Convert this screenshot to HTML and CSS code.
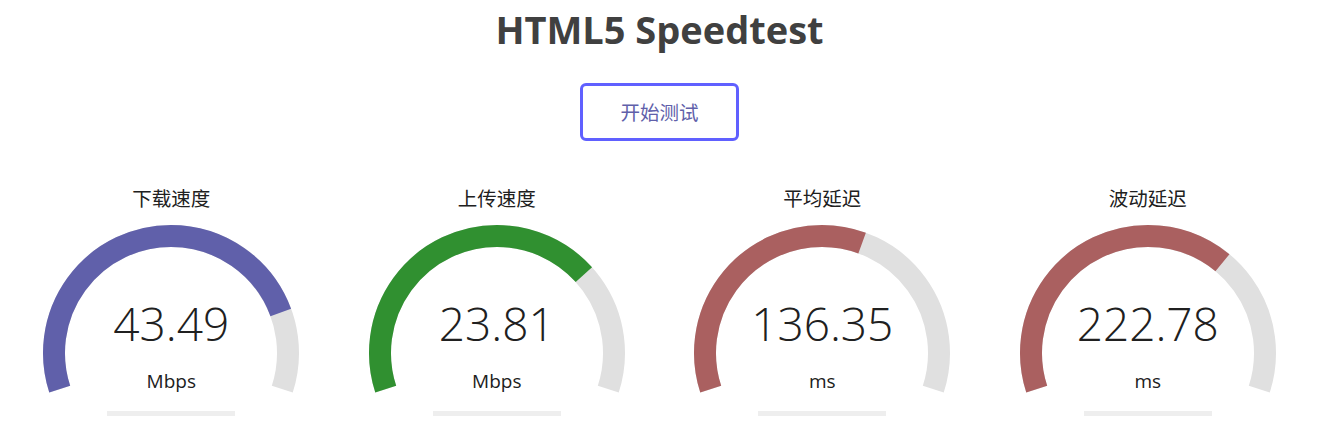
FILE: index.html
```html
<!DOCTYPE html>
<html>
<head>
  <meta charset="UTF-8">
  <title>HTML5 Speedtest</title>
  <link rel="stylesheet" href="styles.css">
</head>
<body>
<div class="page">
  <h1 class="title">HTML5 Speedtest</h1>
  <div class="start-btn">开始测试</div>

  <div class="tests">
    <!-- 下载 -->
    <div class="test-area">
      <svg class="meter" viewBox="0 0 320 240" width="320" height="240">
        <path class="meter-bk" d="M48.73 209.15 A117 117 0 1 1 271.27 209.15" pathLength="100"/>
        <path class="meter-fg dl" d="M48.73 209.15 A117 117 0 1 1 271.27 209.15" pathLength="100" stroke-dasharray="82.28 100"/>
        <rect class="meter-prog" x="96" y="231" width="128" height="5"/>
      </svg>
      <div class="test-text">
        <div class="test-name">下载速度</div>
        <div class="meter-text">43.49</div>
        <div class="unit">Mbps</div>
      </div>
    </div>
    <!-- 上传 -->
    <div class="test-area">
      <svg class="meter" viewBox="0 0 320 240" width="320" height="240">
        <path class="meter-bk" d="M48.73 209.15 A117 117 0 1 1 271.27 209.15" pathLength="100"/>
        <path class="meter-fg ul" d="M48.73 209.15 A117 117 0 1 1 271.27 209.15" pathLength="100" stroke-dasharray="72.20 100"/>
        <rect class="meter-prog" x="96" y="231" width="128" height="5"/>
      </svg>
      <div class="test-text">
        <div class="test-name">上传速度</div>
        <div class="meter-text">23.81</div>
        <div class="unit">Mbps</div>
      </div>
    </div>
    <!-- 延迟 -->
    <div class="test-area">
      <svg class="meter" viewBox="0 0 320 240" width="320" height="240">
        <path class="meter-bk" d="M48.73 209.15 A117 117 0 1 1 271.27 209.15" pathLength="100"/>
        <path class="meter-fg ping" d="M48.73 209.15 A117 117 0 1 1 271.27 209.15" pathLength="100" stroke-dasharray="59.29 100"/>
        <rect class="meter-prog" x="96" y="231" width="128" height="5"/>
      </svg>
      <div class="test-text">
        <div class="test-name">平均延迟</div>
        <div class="meter-text">136.35</div>
        <div class="unit">ms</div>
      </div>
    </div>
    <!-- 抖动 -->
    <div class="test-area">
      <svg class="meter" viewBox="0 0 320 240" width="320" height="240">
        <path class="meter-bk" d="M48.73 209.15 A117 117 0 1 1 271.27 209.15" pathLength="100"/>
        <path class="meter-fg ping" d="M48.73 209.15 A117 117 0 1 1 271.27 209.15" pathLength="100" stroke-dasharray="68.29 100"/>
        <rect class="meter-prog" x="96" y="231" width="128" height="5"/>
      </svg>
      <div class="test-text">
        <div class="test-name">波动延迟</div>
        <div class="meter-text">222.78</div>
        <div class="unit">ms</div>
      </div>
    </div>
  </div>
</div>
</body>
</html>
```

FILE: styles.css
```css
* {
  margin: 0;
  padding: 0;
}
html, body {
  background: #ffffff;
  color: #202020;
}
body {
  font-family: "Open Sans", "Noto Sans CJK SC", sans-serif;
  text-align: center;
}
.page {
  display: flex;
  flex-direction: column;
  align-items: center;
  padding-right: 3px;
}
.title {
  margin-top: 7px;
  font-size: 38px;
  line-height: 44px;
  font-weight: 700;
  color: #404040;
}
.start-btn {
  margin-top: 32px;
  box-sizing: border-box;
  width: 159px;
  height: 58px;
  line-height: 52px;
  border: 3px solid #6060ff;
  border-radius: 6px;
  color: #6060aa;
  font-size: 19.5px;
  font-family: "Noto Sans CJK SC", sans-serif;
  cursor: pointer;
}
.tests {
  margin-top: 39px;
  display: flex;
  gap: 5.5px;
}
.test-area {
  display: grid;
  width: 320px;
  height: 240px;
}
.test-area > * {
  grid-area: 1 / 1;
}
.meter {
  display: block;
}
.meter-bk, .meter-fg {
  fill: none;
  stroke-width: 22;
}
.meter-bk {
  stroke: #e0e0e0;
}
.meter-fg.dl {
  stroke: #6060aa;
}
.meter-fg.ul {
  stroke: #309030;
}
.meter-fg.ping {
  stroke: #aa6060;
}
.meter-prog {
  fill: #eeeeee;
}
.test-text {
  display: flex;
  flex-direction: column;
  align-items: center;
}
.test-name {
  margin-top: 8px;
  font-family: "Noto Sans CJK SC", sans-serif;
  font-size: 19.5px;
  line-height: 20px;
}
.meter-text {
  margin-top: 92px;
  font-size: 46px;
  font-weight: 350;
  line-height: 46px;
}
.unit {
  margin-top: 25px;
  font-size: 19px;
  line-height: 20px;
}
```
